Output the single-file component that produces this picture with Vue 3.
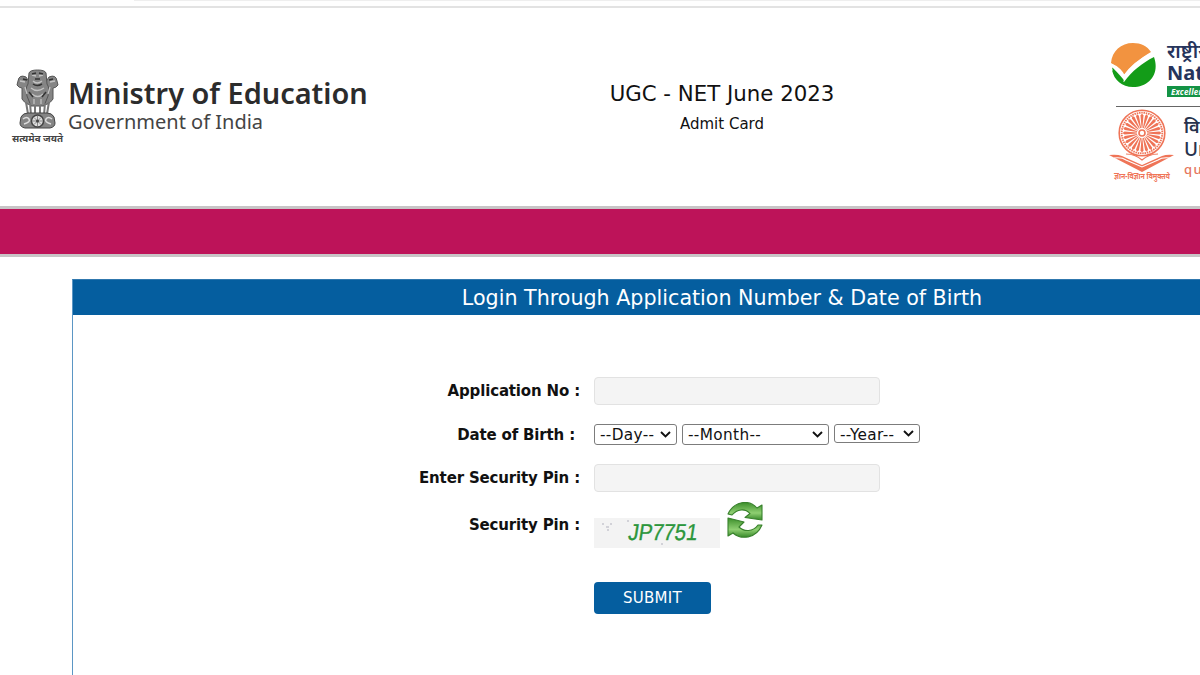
<script setup>
import { ref } from 'vue'

const applicationNo = ref('')
const pin = ref('')
const selects = [
  { name: 'day', label: '--Day--' },
  { name: 'month', label: '--Month--' },
  { name: 'year', label: '--Year--' },
]
const spokes = Array.from({ length: 24 }, (_, i) => i * 15)
</script>

<template>
  <div class="viewport">
    <div class="page">
      <div class="browser-edge"><span></span></div>
      <header class="masthead">
        <div class="ministry">
          <svg class="emblem" width="54" height="76" viewBox="0 0 54 76">
            <g fill="#858585" stroke="#555" stroke-width="1">
              <path d="M15 9 Q8 6 7 13 L6 17 Q8 20 11 20 L11 31 Q16 38 20 36 L25 24z" />
              <path d="M38 9 Q45 6 46 13 L47 17 Q45 20 42 20 L42 31 Q37 38 33 36 L28 24z" />
              <path d="M18 5 Q19 2 26.500 2 Q34 2 35 5 L36 16 Q39 20 37 28 L33 38 H20 L16 28 Q14 20 17 16z" />
            </g>
            <g fill="none" stroke="#c4c4c4" stroke-width="1.300">
              <path d="M21 7l4 1M28 8l4-1M22 13q4 4 9 0M20 20q6 5 13 0M21 26q6 5 11 0M9 13l5 1M39 14l5-1M14 19l2 7M39 19l-2 7M23 31v5M30 31v5" />
            </g>
            <path d="M21 6l4-1M28 5l4 1M24 11h5M22 16q4 3 9 0M12 11l4 1M38 12l4-1M18 24l4 5M35 24l-4 5" fill="none" stroke="#333" stroke-width="1.500" />
            <path d="M15 34l2 12M19 35l1 12M24 37v10M29 37v10M34 35l-1 12M38 34l-2 12" stroke="#777" stroke-width="2" fill="none" />
            <path d="M10 49q2-4 7-4h19q5 0 7 4l1 6q0 4-5 5H14q-5-1-5-5z" fill="#858585" stroke="#444" />
            <path d="M12 51q4-3 6 0t-5 5M41 51q-4-3-6 0t5 5" stroke="#ddd" fill="none" stroke-width="1.500" />
            <circle cx="26.500" cy="53" r="6" fill="#ddd" stroke="#444" stroke-width="1.500" />
            <path d="M26.500 48v10M21.500 53h10M23 49.500l7 7M30 49.500l-7 7" stroke="#666" stroke-width=".7" />
            <circle cx="26.500" cy="53" r="1.500" fill="#444" />
            <text x="1" y="73.500" textLength="51" lengthAdjust="spacingAndGlyphs" class="motto">सत्यमेव जयते</text>
          </svg>
          <div class="ministry-name">
            <strong>Ministry of Education</strong>
            <span>Government of India</span>
          </div>
        </div>
        <div class="exam">
          <h1>UGC - NET June 2023</h1>
          <p>Admit Card</p>
        </div>
        <div class="agencies">
          <div class="agency nta">
            <svg width="46" height="46" viewBox="0 0 46 46">
              <path d="M1 21C2 9 11 1 23 1c8 0 14 3 18 9C31 16 21 24 14 33 10 28 6 24 1 21z" fill="#f29340" />
              <path d="M44 15c6 17-5 30-21 30C12 45 4 38 2 28l12 12C22 29 32 21 44 15z" fill="#139c18" />
              <path d="M2 25L3 30Q6 38 12 41L14 38Q8 31 2 25z" fill="#139c18" />
              <path d="M1 23C6 25 11 29 14 35 21 25 31 17 42 12" fill="none" stroke="#fff" stroke-width="3" />
            </svg>
            <div class="agency-text">
              <span class="hindi">राष्ट्रीय</span>
              <b class="latin">National</b>
              <i>Excellence</i>
            </div>
          </div>
          <div class="agency ugc">
            <svg width="66" height="76" viewBox="0 0 66 76">
              <g fill="none" stroke="#ef7457">
                <circle cx="33" cy="26" r="22.800" stroke-width="1.600" />
                <circle cx="33" cy="26" r="20.300" stroke-width="1.800" stroke-dasharray="1.500 .8" />
              </g>
              <g fill="#ef7457">
                <path v-for="angle in spokes" :key="angle" d="M32.600 21L31.500 8.500L33 6.500L34.500 8.500L33.400 21z" :transform="`rotate(${angle} 33 26)`" />
                <circle cx="33" cy="26" r="3.800" />
                <path d="M0 48q8-1 13 1l20 9 20-9q5-2 12-1L33 65z" />
              </g>
              <circle cx="33" cy="26" r="2.200" fill="#fff" />
              <path d="M5 51q8-1 12 2l16 7 16-7q4-3 12-2M14 48l19 8 19-8" fill="none" stroke="#fff" stroke-width="1.100" />
              <path d="M17 47q9 0 16 6 7-6 16-6" fill="none" stroke="#ef7457" stroke-width="1.200" />
              <text x="5" y="71.500" textLength="56" lengthAdjust="spacingAndGlyphs" class="ugc-motto">ज्ञान-विज्ञान विमुक्तये</text>
            </svg>
            <div class="agency-text">
              <span class="ugc-hindi">विश्व</span>
              <span class="ugc-latin">University</span>
              <span class="quality">quality</span>
            </div>
          </div>
        </div>
      </header>
      <div class="band"></div>
      <main class="panel">
        <h2>Login Through Application Number &amp; Date of Birth</h2>
        <form @submit.prevent>
          <label class="row app"><span>Application No :</span><input v-model="applicationNo" /></label>
          <div class="row dob">
            <span>Date of Birth :</span>
            <div class="selects">
              <div v-for="s in selects" :key="s.name" class="select" :class="s.name">
                <span>{{ s.label }}</span>
                <svg width="11" height="7" viewBox="0 0 11 7"><path d="M1 1l4.500 4.500L10 1" fill="none" stroke="#111" stroke-width="1.900" /></svg>
              </div>
            </div>
          </div>
          <label class="row enter"><span>Enter Security Pin :</span><input v-model="pin" /></label>
          <div class="row security">
            <span>Security Pin :</span>
            <div class="captcha">
              <svg width="126" height="30" viewBox="0 0 126 30">
                <rect width="126" height="30" fill="#f3f3f3" />
                <path d="M8 6h2M12 9h3M16 6h2M13 12h2M33 3h2M67 26h2" stroke="#d2d2d8" stroke-width="2" />
                <text class="code" transform="translate(33.500 21.500) skewX(-9)" textLength="69" lengthAdjust="spacingAndGlyphs">JP7751</text>
              </svg>
              <svg class="refresh" width="36" height="36" viewBox="0 0 36 36">
                <defs>
                  <linearGradient id="leaf" x1="0" y1="0" x2="0" y2="1"><stop stop-color="#3c8f2b" /><stop offset=".6" stop-color="#8fcf72" /><stop offset="1" stop-color="#37892a" /></linearGradient>
                </defs>
                <g fill="url(#leaf)" stroke="#38812c" stroke-width="1.100" stroke-linejoin="round">
                  <path d="M1 12C7-1 22-3 30 6l5-3v15L18 15.500l5-4C18 6 10 7 5 13z" />
                  <path d="M35 23C29 37 14 38 6 31l-5 3V16l16 4-5 5c5 5 14 5 19-2z" />
                </g>
              </svg>
            </div>
          </div>
          <button type="submit">SUBMIT</button>
        </form>
      </main>
    </div>
  </div>
</template>

<style>
body { margin: 0; background: #fff; }
</style>

<style scoped>
* { box-sizing: border-box; }
.viewport { width: 1200px; height: 675px; overflow: hidden; background: #fff; font-family: "DejaVu Sans", sans-serif; color: #111; }
.page { width: 1444px; }
.browser-edge { height: 8px; border-bottom: 2px solid #e2e2e2; background: #fefefe; }
.browser-edge span { display: block; height: 1px; margin-left: 134px; background: #eee; }
.masthead { height: 198px; display: grid; grid-template-columns: 420px 604px 420px; }
.ministry { display: flex; padding: 60px 0 0 11px; }
.emblem { flex: none; }
.motto { font: bold 9px "Noto Sans", sans-serif; fill: #444; }
.ministry-name { display: flex; flex-direction: column; padding: 7px 0 0 3px; font-family: "Noto Sans", sans-serif; white-space: nowrap; }
.ministry-name strong { font-size: 28.900px; line-height: 36px; font-weight: 600; color: #2c2c2c; }
.ministry-name span { font-size: 20px; line-height: 24px; margin-top: -1px; color: #444; }
.exam { text-align: center; padding-top: 71px; }
h1 { margin: 0; font-size: 21.300px; line-height: 30px; font-weight: 400; }
.exam p { margin: 4px 0 0; font-size: 15px; line-height: 22px; }
.agencies { padding: 34px 0 0 85px; white-space: nowrap; }
.agency { display: flex; }
.nta { height: 65px; margin-left: 1px; border-bottom: 1px solid #555; border-image: linear-gradient(to right, transparent 7px, #666 7px) 1; }
.nta > svg { flex: none; }
.nta .agency-text { padding-left: 11px; }
.agency-text { display: flex; flex-direction: column; align-items: flex-start; font-family: "Noto Sans", sans-serif; }
.hindi { font-size: 19.500px; line-height: 18px; font-weight: 600; color: #26345c; }
.latin { font-size: 20px; line-height: 25px; color: #26345c; }
.agency-text i { background: #149345; color: #fff; font-weight: bold; font-size: 8px; line-height: 11px; padding-left: 4px; margin-top: 1px; letter-spacing: .2px; }
.nta .agency-text i { padding-right: 20px; }
.ugc svg { flex: none; }
.ugc .agency-text { padding: 9px 0 0 9px; }
.ugc-hindi { font-size: 18px; line-height: 21px; font-weight: 600; color: #27324d; }
.ugc-latin { font-size: 19px; line-height: 24px; font-weight: 500; color: #27324d; }
.quality { font-size: 13px; line-height: 16px; font-weight: 500; letter-spacing: 1.500px; color: #e5765e; }
.ugc-motto { font: bold 8px "Noto Sans", sans-serif; fill: #ef7457; }
.band { height: 51px; background: #bd1359; border: solid #c8c4c6; border-width: 3px 0; }
.panel { width: 1300px; height: 500px; margin: 22px 0 0 72px; border: 1px solid #5b96c4; border-top-color: #3078ae; }
h2 { margin: 0; height: 35px; background: #055e9f; color: #fff; text-align: center; font-size: 20.650px; line-height: 37px; font-weight: 400; }
form { padding-top: 62px; }
.row { display: grid; grid-template-columns: 507px auto; column-gap: 14px; align-items: center; }
.row > span { text-align: right; font-weight: bold; font-size: 15px; letter-spacing: -.16px; }
.dob > span { padding-right: 5px; }
.row input { width: 286px; height: 28px; border: 1px solid #e2e2e2; border-radius: 4px; background: #f4f4f4; outline: none; }
.app, .enter { height: 28px; }
.dob { height: 59px; }
.selects { display: flex; align-items: center; gap: 5px; padding-bottom: 1px; }
.select { display: flex; align-items: center; justify-content: space-between; height: 21px; border: 1px solid #7c7c7c; border-radius: 3px; padding: 0 5px; font-size: 15.300px; letter-spacing: .35px; white-space: nowrap; }
.select span { position: relative; top: 1px; }
.year span { top: 2px; }
.day { width: 83px; }
.month { width: 147px; }
.year { width: 86px; height: 19px; margin-top: -2px; }
.security { height: 66px; }
.captcha { display: flex; padding-top: 15px; }
.refresh { margin: -16px 0 0 7px; }
.code { font: 23px "Liberation Sans", sans-serif; fill: #2b963b; stroke: #2b963b; stroke-width: .4px; }
button { display: block; margin: 24px 0 0 521px; width: 117px; height: 32px; padding: 0; border: 0; border-radius: 4px; background: #055e9f; color: #fff; font: 15px "DejaVu Sans", sans-serif; letter-spacing: .25px; }
</style>
